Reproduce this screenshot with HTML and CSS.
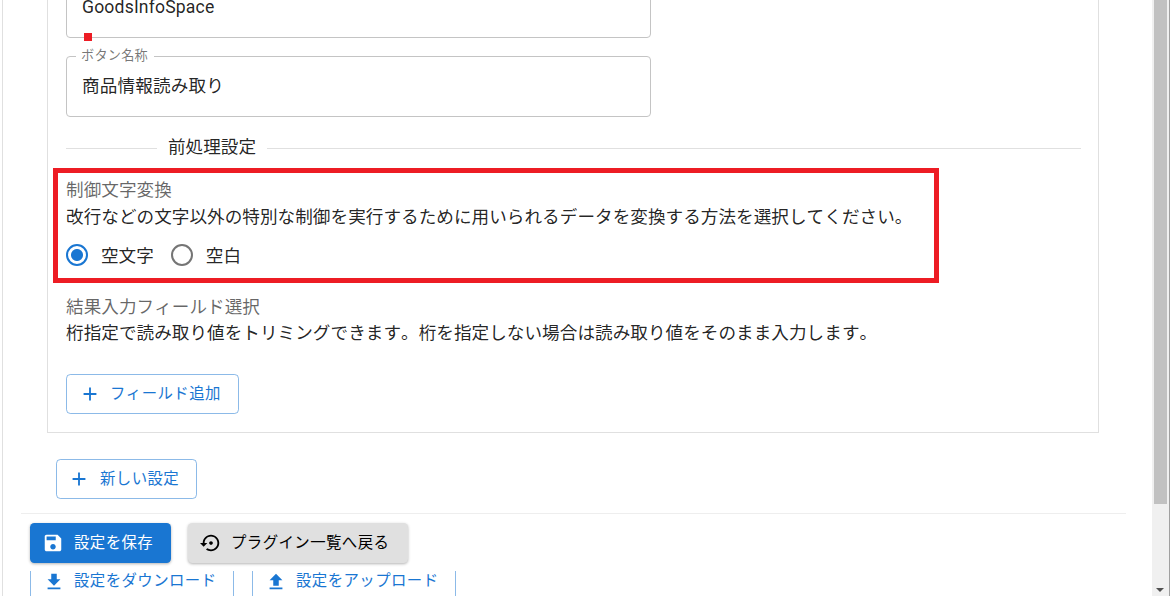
FILE: index.html
```html
<!DOCTYPE html>
<html lang="ja">
<head>
    <meta charset="UTF-8">
    <title>プラグイン設定</title>
    <link rel="stylesheet" href="styles.css">
</head>
<body>
    <div class="page">
        <div class="main">
            <div class="panel">
                <div class="field field-first">
                    <span class="field-value">GoodsInfoSpace</span>
                    <span class="red-dot"></span>
                </div>
                <div class="field">
                    <span class="field-label">ボタン名称</span>
                    <span class="field-value">商品情報読み取り</span>
                </div>
                <div class="divider"><span>前処理設定</span></div>
                <div class="section section-control">
                    <div class="highlight"></div>
                    <p class="section-title">制御文字変換</p>
                    <p class="section-text">改行などの文字以外の特別な制御を実行するために用いられるデータを変換する方法を選択してください。</p>
                    <div class="radio-row">
                        <label class="radio radio-on"><span class="radio-mark"></span><span class="radio-text">空文字</span></label>
                        <label class="radio"><span class="radio-mark"></span><span class="radio-text">空白</span></label>
                    </div>
                </div>
                <div class="section section-result">
                    <p class="section-title">結果入力フィールド選択</p>
                    <p class="section-text">桁指定で読み取り値をトリミングできます。桁を指定しない場合は読み取り値をそのまま入力します。</p>
                </div>
                <button class="btn btn-outlined btn-field">
                    <svg class="icon" viewBox="0 0 24 24"><path d="M19 13h-6v6h-2v-6H5v-2h6V5h2v6h6v2z"/></svg>
                    <span class="btn-label">フィールド追加</span>
                </button>
            </div>
            <button class="btn btn-outlined btn-new">
                <svg class="icon" viewBox="0 0 24 24"><path d="M19 13h-6v6h-2v-6H5v-2h6V5h2v6h6v2z"/></svg>
                <span class="btn-label">新しい設定</span>
            </button>
            <hr class="rule">
            <div class="actions">
                <button class="btn btn-save">
                    <svg class="icon" viewBox="0 0 24 24"><path d="M17 3H5c-1.11 0-2 .9-2 2v14c0 1.1.89 2 2 2h14c1.1 0 2-.9 2-2V7l-4-4zm-5 16c-1.66 0-3-1.34-3-3s1.34-3 3-3 3 1.34 3 3-1.34 3-3 3zm3-10H5V5h10v4z"/></svg>
                    <span class="btn-label">設定を保存</span>
                </button>
                <button class="btn btn-back">
                    <svg class="icon" viewBox="0 0 24 24"><path d="M14 12c0-1.1-.9-2-2-2s-2 .9-2 2 .9 2 2 2 2-.9 2-2zm-2-9c-4.97 0-9 4.03-9 9H0l4 4 4-4H5c0-3.87 3.13-7 7-7s7 3.13 7 7-3.13 7-7 7c-1.51 0-2.91-.49-4.06-1.3l-1.42 1.44C8.04 20.3 9.94 21 12 21c4.97 0 9-4.03 9-9s-4.03-9-9-9z"/></svg>
                    <span class="btn-label">プラグイン一覧へ戻る</span>
                </button>
            </div>
            <div class="transfer">
                <a class="transfer-link transfer-down">
                    <svg class="icon" viewBox="0 0 24 24"><path d="M19 9h-4V3H9v6H5l7 7 7-7zM5 18v2h14v-2H5z"/></svg>
                    設定をダウンロード
                </a>
                <a class="transfer-link transfer-up">
                    <svg class="icon" viewBox="0 0 24 24"><path d="M9 16h6v-6h4l-7-7-7 7h4v6zm-4 2h14v2H5v-2z"/></svg>
                    設定をアップロード
                </a>
            </div>
        </div>
        <div class="scrollbar">
            <div class="scroll-thumb"></div>
            <div class="scroll-arrow"></div>
        </div>
    </div>
</body>
</html>
```

FILE: styles.css
```css
* {
    box-sizing: border-box;
}

html, body {
    margin: 0;
    padding: 0;
    height: 596px;
    overflow: hidden;
    background: #fff;
}

body {
    font-family: Roboto, "Noto Sans CJK JP", sans-serif;
    font-kerning: none;
    color: rgba(0, 0, 0, 0.87);
    font-size: 17.6px;
}

.page {
    display: flex;
    width: 1172px;
    height: 596px;
    padding-left: 2px;
}

.main {
    flex: 1;
    min-width: 0;
    height: 596px;
    overflow: hidden;
    border-left: 1px solid #e0e0e0;
    padding-left: 18px;
}

.panel {
    width: 1052px;
    height: 456px;
    margin-top: -23px;
    margin-left: 26px;
    margin-bottom: 26px;
    padding: 0 17px 0 18px;
    border: 1px solid #e0e0e0;
    border-top: 0;
}

.field {
    position: relative;
    display: flex;
    align-items: center;
    width: 585px;
    height: 61px;
    margin-bottom: 18px;
    padding-left: 15px;
    border: 1px solid #c4c4c4;
    border-radius: 4px;
}

.field-value {
    margin-bottom: 4px;
    letter-spacing: 0.165px;
}

.field-first .field-value {
    margin-bottom: 2px;
}

.field-label {
    position: absolute;
    top: -9px;
    left: 9px;
    padding: 0 6px 0 5px;
    background: #fff;
    font-size: 13.2px;
    line-height: 16px;
    letter-spacing: 0.2px;
    color: rgba(0, 0, 0, 0.54);
}

.red-dot {
    position: absolute;
    left: 17px;
    bottom: -4px;
    width: 8px;
    height: 8px;
    background: #ed1c24;
}

.divider {
    display: flex;
    align-items: center;
    height: 26px;
    margin-top: 17px;
    margin-bottom: 16px;
}

.divider::before {
    content: "";
    width: 91px;
    border-top: 1px solid #e0e0e0;
}

.divider::after {
    content: "";
    flex: 1;
    border-top: 1px solid #e0e0e0;
}

.divider span {
    padding: 0 11px;
    margin-bottom: 2px;
    line-height: 26px;
}

.section {
    position: relative;
}

.section-title,
.section-text {
    margin: 0;
    line-height: 27px;
    letter-spacing: 0.04px;
    white-space: nowrap;
}

.section-title {
    color: rgba(0, 0, 0, 0.6);
}

.highlight {
    position: absolute;
    top: -9px;
    left: -13px;
    width: 886px;
    height: 115px;
    border: 5px solid #ed1c24;
}

.radio-row {
    display: flex;
    gap: 17px;
    height: 48px;
    align-items: center;
}

.radio {
    display: flex;
    align-items: center;
    gap: 13px;
}

.radio-text {
    margin-bottom: 2px;
}

.radio-mark {
    width: 22px;
    height: 22px;
    border: 2px solid #757575;
    border-radius: 50%;
}

.radio-on .radio-mark {
    border-color: #1976d2;
    background: radial-gradient(circle, #1976d2 0, #1976d2 5.5px, #fff 6.5px);
}

.section-result {
    margin-top: 15px;
    margin-bottom: 27px;
}

.section-result .section-text {
    margin-top: -1px;
}

.btn {
    display: inline-flex;
    align-items: center;
    height: 40px;
    padding: 0 16px;
    border: 0;
    border-radius: 4.4px;
    font-family: inherit;
    font-kerning: none;
    font-size: 15.4px;
    letter-spacing: 0.44px;
    background: none;
}

.btn-label {
    margin-bottom: 5px;
}

.icon {
    width: 22px;
    height: 22px;
    margin-right: 9px;
    margin-left: -4px;
    fill: currentColor;
}

.btn-outlined {
    border: 1px solid rgba(25, 118, 210, 0.5);
    color: #1976d2;
}

.btn-field {
    display: flex;
    width: 173px;
}

.btn-new {
    display: flex;
    width: 141px;
    margin-left: 35px;
    padding-left: 15px;
}

.btn-new .icon,
.btn-save .icon {
    margin-right: 10px;
}

.rule {
    width: 1105px;
    height: 1px;
    margin: 14px 0 9px 0;
    border: 0;
    background: #eee;
}

.actions {
    display: flex;
    gap: 17px;
    margin-left: 9px;
}

.btn-save {
    width: 141px;
    background: #1976d2;
    color: #fff;
    box-shadow: 0 1px 3px rgba(0, 0, 0, 0.3);
}

.btn-back {
    width: 220px;
    background: #e0e0e0;
    box-shadow: 0 1px 3px rgba(0, 0, 0, 0.3);
}

.transfer {
    display: flex;
    gap: 18px;
    margin-top: 8px;
    margin-left: 9px;
}

.transfer-link {
    display: flex;
    align-items: flex-start;
    height: 40px;
    padding-left: 16px;
    border-left: 1px solid rgba(25, 118, 210, 0.5);
    border-right: 1px solid rgba(25, 118, 210, 0.5);
    font-size: 15.4px;
    line-height: 20px;
    letter-spacing: 0.44px;
    color: #1976d2;
}

.transfer-down,
.transfer-up {
    width: 204px;
}

.scrollbar {
    position: relative;
    width: 17px;
    height: 596px;
    background: #f0f0f0;
    margin-right: 3px;
    box-shadow: 1px 0 0 #a0a0a0;
}

.scroll-thumb {
    width: 13px;
    height: 504px;
    margin-left: 2px;
    background: #c1c1c1;
}

.scroll-arrow {
    position: absolute;
    left: 4px;
    bottom: 4px;
    border-left: 4px solid transparent;
    border-right: 4px solid transparent;
    border-top: 4px solid #505050;
}
```
